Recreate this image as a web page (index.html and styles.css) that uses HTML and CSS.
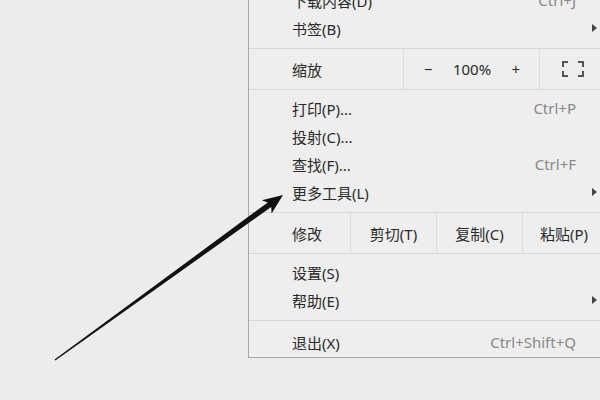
FILE: index.html
```html
<!DOCTYPE html>
<html>
<head>
    <title>Menu</title>
    <meta charset="UTF-8">
    <link rel="stylesheet" href="styles.css">
</head>
<body>
    <div class="page">
        <div class="menu">
            <div class="group group-top">
                <div class="item"><span>下载内容(D)</span><span class="key">Ctrl+J</span></div>
                <div class="item"><span>书签(B)</span><span class="sub"></span></div>
            </div>
            <div class="row zoom-row">
                <div class="cell label">缩放</div>
                <div class="cell zoom">
                    <span>−</span>
                    <span>100%</span>
                    <span>+</span>
                </div>
                <div class="cell full">
                    <svg width="22" height="16" viewBox="0 0 22 16">
                        <path d="M1 6V1H6M16 1H21V6M21 10V15H16M6 15H1V10" fill="none" stroke="#555" stroke-width="2"/>
                    </svg>
                </div>
            </div>
            <div class="group">
                <div class="item"><span>打印(P)...</span><span class="key">Ctrl+P</span></div>
                <div class="item"><span>投射(C)...</span></div>
                <div class="item"><span>查找(F)...</span><span class="key">Ctrl+F</span></div>
                <div class="item"><span>更多工具(L)</span><span class="sub"></span></div>
            </div>
            <div class="row edit-row">
                <div class="cell label">修改</div>
                <div class="cell">剪切(T)</div>
                <div class="cell">复制(C)</div>
                <div class="cell">粘贴(P)</div>
            </div>
            <div class="group">
                <div class="item"><span>设置(S)</span></div>
                <div class="item"><span>帮助(E)</span><span class="sub"></span></div>
            </div>
            <div class="group group-last">
                <div class="item"><span>退出(X)</span><span class="key">Ctrl+Shift+Q</span></div>
            </div>
        </div>
    </div>

    <svg class="pointer" width="600" height="400" viewBox="0 0 600 400">
        <polygon points="54.6,359.6 267.8,202.4 261.8,200.2 283,195 271.6,213.4 271.2,207 55.4,360.4" fill="#111"/>
    </svg>
</body>
</html>
```

FILE: styles.css
```css
body {
    margin: 0;
    padding: 0;
    background-color: #ececec;
    font-family: "Noto Sans", "Noto Sans CJK SC", sans-serif;
    font-size: 15px;
    color: #2a2a2a;
    overflow: hidden;
    width: 600px;
    height: 400px;
}
.page {
    padding-left: 248px;
    margin-top: -14px;
}
.menu {
    width: 356px;
    background-color: #eeeeee;
    border-left: 1px solid #a8a8a8;
    border-bottom: 1px solid #a8a8a8;
}
.group {
    padding: 4px 0 6px;
    border-bottom: 1px solid #d6d6d6;
}
.group-top {
    padding-top: 0;
}
.group-last {
    padding: 7px 0 1px;
    border-bottom: none;
}
.item {
    height: 28px;
    display: flex;
    align-items: center;
    justify-content: space-between;
    padding: 0 29px 0 43px;
    position: relative;
}
.key {
    color: #888;
}
.sub {
    position: absolute;
    right: 8px;
    top: 10px;
    width: 0;
    height: 0;
    border-top: 4px solid transparent;
    border-bottom: 4px solid transparent;
    border-left: 5px solid #444;
}
.row {
    display: flex;
    height: 40px;
    border-bottom: 1px solid #d6d6d6;
}
.cell {
    display: flex;
    align-items: center;
    justify-content: center;
    flex-shrink: 0;
    box-sizing: border-box;
    border-left: 1px solid #dcdcdc;
}
.row .cell.label {
    border-left: none;
    justify-content: flex-start;
    padding-left: 43px;
}
.zoom-row .label {
    width: 154px;
}
.zoom {
    width: 136px;
    justify-content: space-between;
    padding: 0 19px 0 20px;
}
.full {
    flex: 1;
}
.edit-row .cell {
    width: 86px;
}
.edit-row .cell.label {
    width: 101px;
}
.edit-row .cell:last-child {
    flex: 1;
}
.pointer {
    position: absolute;
    left: 0;
    top: 0;
}
```
